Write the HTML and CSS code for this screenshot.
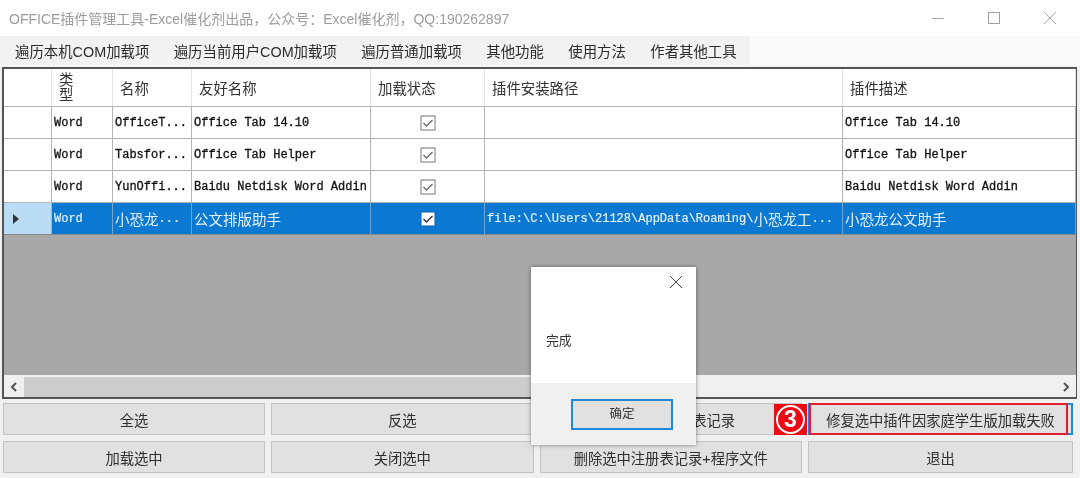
FILE: index.html
```html
<!DOCTYPE html>
<html lang="zh">
<head>
<meta charset="utf-8">
<title>OFFICE插件管理工具</title>
<link rel="stylesheet" href="styles.css">
</head>
<body>
<div class="window">
  <header class="titlebar">
    <span class="title">OFFICE插件管理工具-Excel催化剂出品&#xFF0C;公众号&#xFF1A;Excel催化剂&#xFF0C;QQ:190262897</span>
    <div class="controls">
      <svg width="14" height="14" viewBox="0 0 14 14"><path d="M1 7.500h12" stroke="#a8a8a8" fill="none"/></svg>
      <svg width="14" height="14" viewBox="0 0 14 14"><rect x="1.500" y="1.500" width="11" height="11" stroke="#a0a0a0" fill="none"/></svg>
      <svg width="14" height="14" viewBox="0 0 14 14"><path d="M1 1l12 12M13 1L1 13" stroke="#a8a8a8" fill="none"/></svg>
    </div>
  </header>
  <nav class="menubar">
    <div class="menu">
      <span>遍历本机COM加载项</span>
      <span>遍历当前用户COM加载项</span>
      <span>遍历普通加载项</span>
      <span>其他功能</span>
      <span>使用方法</span>
      <span>作者其他工具</span>
    </div>
  </nav>
  <section class="gridframe">
    <div class="grid">
      <div class="row head">
        <div class="cell rh"></div>
        <div class="cell"><span class="narrow">类型</span></div>
        <div class="cell">名称</div>
        <div class="cell">友好名称</div>
        <div class="cell">加载状态</div>
        <div class="cell">插件安装路径</div>
        <div class="cell">插件描述</div>
      </div>
      <div class="row">
        <div class="cell rh"></div>
        <div class="cell">Word</div>
        <div class="cell">OfficeT...</div>
        <div class="cell">Office Tab 14.10</div>
        <div class="cell chk"><svg width="16" height="16" viewBox="0 0 16 16"><rect x="1" y="1" width="14" height="14" fill="none" stroke="#777"/><path d="M3.500 8l3 3 6-6" fill="none" stroke="#666" stroke-width="1.300"/></svg></div>
        <div class="cell"></div>
        <div class="cell">Office Tab 14.10</div>
      </div>
      <div class="row">
        <div class="cell rh"></div>
        <div class="cell">Word</div>
        <div class="cell">Tabsfor...</div>
        <div class="cell">Office Tab Helper</div>
        <div class="cell chk"><svg width="16" height="16" viewBox="0 0 16 16"><rect x="1" y="1" width="14" height="14" fill="none" stroke="#777"/><path d="M3.500 8l3 3 6-6" fill="none" stroke="#666" stroke-width="1.300"/></svg></div>
        <div class="cell"></div>
        <div class="cell">Office Tab Helper</div>
      </div>
      <div class="row">
        <div class="cell rh"></div>
        <div class="cell">Word</div>
        <div class="cell">YunOffi...</div>
        <div class="cell">Baidu Netdisk Word Addin</div>
        <div class="cell chk"><svg width="16" height="16" viewBox="0 0 16 16"><rect x="1" y="1" width="14" height="14" fill="none" stroke="#777"/><path d="M3.500 8l3 3 6-6" fill="none" stroke="#666" stroke-width="1.300"/></svg></div>
        <div class="cell"></div>
        <div class="cell">Baidu Netdisk Word Addin</div>
      </div>
      <div class="row selected">
        <div class="cell rh"><svg width="8" height="10" viewBox="0 0 8 10"><path d="M1 0l6 5-6 5z" fill="#333"/></svg></div>
        <div class="cell">Word</div>
        <div class="cell"><span class="cjk">小恐龙</span>...</div>
        <div class="cell"><span class="cjk">公文排版助手</span></div>
        <div class="cell chk"><svg width="16" height="16" viewBox="0 0 16 16"><rect x="1" y="1" width="14" height="14" fill="#fff" stroke="#0a62b0"/><path d="M3.500 8l3 3 6-6" fill="none" stroke="#333" stroke-width="1.400"/></svg></div>
        <div class="cell">file:\C:\Users\21128\AppData\Roaming\<span class="cjk">小恐龙工</span>...</div>
        <div class="cell"><span class="cjk">小恐龙公文助手</span></div>
      </div>
      <div class="empty"></div>
    </div>
    <div class="hscroll">
      <span class="arrow">
        <svg width="8" height="10" viewBox="0 0 8 10"><path d="M6 1L2 5l4 4" fill="none" stroke="#555" stroke-width="2"/></svg>
      </span>
      <span class="thumb"></span>
      <span class="track"></span>
      <span class="arrow">
        <svg width="8" height="10" viewBox="0 0 8 10"><path d="M2 1l4 4-4 4" fill="none" stroke="#555" stroke-width="2"/></svg>
      </span>
    </div>
  </section>
  <section class="buttons">
    <button class="btn">全选</button>
    <button class="btn">反选</button>
    <button class="btn covered"><span class="covered-text">删除选中注册</span>表记录</button>
    <button class="btn focus">修复选中插件因家庭学生版加载失败</button>
    <button class="btn">加载选中</button>
    <button class="btn">关闭选中</button>
    <button class="btn">删除选中注册表记录+程序文件</button>
    <button class="btn">退出</button>
  </section>
</div>
<div class="badge"><span>3</span></div>
<div class="redbox"></div>
<div class="dialog">
  <div class="dialog-top">
    <svg class="dialog-x" width="14" height="14" viewBox="0 0 14 14"><path d="M1 1l12 12M13 1L1 13" stroke="#444" fill="none"/></svg>
    <p class="dialog-msg">完成</p>
  </div>
  <div class="dialog-foot">
    <button class="ok">确定</button>
  </div>
</div>
</body>
</html>
```

FILE: styles.css
```css
* { box-sizing: border-box; }
html, body { margin: 0; padding: 0; }
body {
  width: 1080px;
  height: 478px;
  overflow: hidden;
  position: relative;
  background: #fff;
  font-family: "Liberation Sans", "Noto Sans CJK SC", sans-serif;
  color: #333;
}
.window, .dialog, .badge { filter: blur(0.45px); }
.window {
  width: 1080px;
  height: 478px;
  background: #f1f0f1;
  display: flex;
  flex-direction: column;
}
.titlebar {
  height: 36px;
  background: #fff;
  display: flex;
  align-items: center;
  justify-content: space-between;
  padding-left: 9px;
  padding-right: 23px;
  flex: none;
}
.title { font-size: 14px; color: #9c9c9c; white-space: nowrap; }
.controls { display: flex; gap: 42px; }
.menubar { height: 30px; background: #fafafa; flex: none; }
.menu {
  width: 750px;
  height: 29px;
  background: #f2f2f2;
  display: flex;
  align-items: center;
  padding-left: 15px;
  gap: 24.400px;
  font-size: 14.400px;
  color: #2b2b2b;
  white-space: nowrap;
}
.gridframe {
  margin: 1px 3px 0 2px;
  height: 332px;
  border: 2px solid #555;
  border-right-width: 1px;
  display: flex;
  flex-direction: column;
  flex: none;
  background: #a9a8a9;
}
.grid { flex: 1; display: flex; flex-direction: column; min-height: 0; }
.row {
  display: grid;
  grid-template-columns: 48px 61px 79px 179px 114px 358px 1fr;
  height: 32px;
  background: #fff;
  flex: none;
  border-bottom: 1px solid #b4b4b4;
}
.head { height: 38px; }
.cell {
  border-right: 1px solid #b4b4b4;
  display: flex;
  align-items: center;
  padding-left: 2px;
  font-family: "Liberation Mono", "Noto Sans CJK SC", monospace;
  font-size: 12px;
  font-weight: 400;
  color: #111;
  -webkit-text-stroke: 0.3px #111;
  white-space: nowrap;
  overflow: hidden;
}
.head .cell {
  font-family: "Liberation Sans", "Noto Sans CJK SC", sans-serif;
  font-size: 14.400px;
  -webkit-text-stroke: 0;
  padding-left: 7px;
  border-right-color: #e4e4e4;
  color: #333;
}
.narrow { width: 15px; white-space: normal; line-height: 15px; }
.rh { background: #fff; padding: 0; }
.chk { justify-content: center; padding: 0; }
.selected { background: #0b78d2; border-bottom-color: #888; }
.selected .cell { color: #e4f1fb; -webkit-text-stroke: 0.2px #e4f1fb; border-right-color: #6fa8d8; }
.selected .rh { background: #badcf4; padding-left: 8px; border-right-color: #98b8d0; }
.cjk { font-family: "Noto Sans CJK SC", sans-serif; font-size: 14.500px; -webkit-text-stroke: 0; }
.empty { flex: 1; background: #a9a8a9; border-bottom: 2px solid #f2f2f2; }
.hscroll { height: 20px; display: flex; background: #f1f0f1; flex: none; }
.arrow { width: 20px; background: #f1f0f1; display: flex; align-items: center; justify-content: center; }
.thumb { width: 665px; background: #cdcccd; }
.track { flex: 1; }
.buttons {
  flex: none;
  margin: 4px 7px 0 3px;
  display: grid;
  grid-template-columns: 262px 262.500px 262.500px 1fr;
  grid-auto-rows: 32px;
  gap: 6px;
}
.btn {
  background: #e2e1e2;
  border: 1px solid #c4c3c4;
  font-family: "Liberation Sans", "Noto Sans CJK SC", sans-serif;
  font-size: 14.300px;
  color: #2e2e2e;
  padding: 0;
  white-space: nowrap;
}
.btn.focus { border: 2px solid #2388d8; }
.covered-text { visibility: hidden; }
.badge {
  position: absolute;
  left: 774px;
  top: 404px;
  width: 33px;
  height: 31px;
  background: #ee0a14;
  display: flex;
  align-items: center;
  justify-content: center;
}
.badge span {
  width: 29px;
  height: 29px;
  border: 2px solid #fff;
  border-radius: 50%;
  color: #fff;
  font: 700 23px/25px "Liberation Sans", sans-serif;
  text-align: center;
}
.redbox {
  position: absolute;
  left: 809px;
  top: 403px;
  width: 259px;
  height: 32px;
  border: 2px solid #e0202c;
}
.dialog {
  position: absolute;
  left: 531px;
  top: 267px;
  width: 165px;
  height: 178px;
  background: #fff;
  box-shadow: 0 0 4px rgba(0,0,0,.45);
  display: flex;
  flex-direction: column;
}
.dialog-top { height: 116px; position: relative; padding: 63px 0 0 15px; }
.dialog-x { position: absolute; right: 13px; top: 8px; }
.dialog-msg { margin: 0; font-size: 12.800px; color: #333; }
.dialog-foot {
  flex: 1;
  background: #f1f0f1;
  padding: 16px 23px 0 0;
  display: flex;
  justify-content: flex-end;
  align-items: flex-start;
}
.ok {
  width: 102px;
  height: 31px;
  background: #e2e1e2;
  border: 2px solid #2388d8;
  font-family: "Liberation Sans", "Noto Sans CJK SC", sans-serif;
  font-size: 12.500px;
  line-height: 24px;
  color: #333;
  padding: 0 0 2px;
}
```
